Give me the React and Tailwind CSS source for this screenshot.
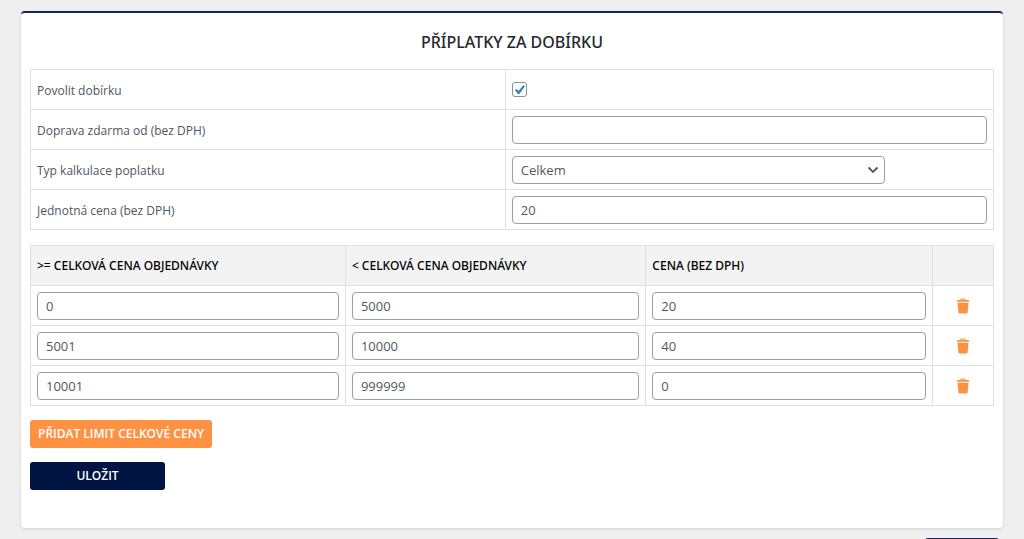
import React, { useState } from "react";

const fieldClass =
  "block h-7 w-full rounded border border-[#9b9ea3] bg-white px-2 font-['Open_Sans',sans-serif] text-[13px] leading-5 text-[#50575e] outline-none";
const labelCell = "h-10 border border-[#e0e0e0] px-1.5 pt-0.5 pb-0";
const bodyCell = "h-10 border border-[#e0e0e0] px-1.5 py-0";
const headCell = "h-10 border border-[#e0e0e0] px-1.5 py-0 text-left font-medium";

const initialRows = [
  { id: 1, from: "0", to: "5000", price: "20" },
  { id: 2, from: "5001", to: "10000", price: "40" },
  { id: 3, from: "10001", to: "999999", price: "0" },
];

function TrashIcon() {
  return (
    <svg viewBox="0 0 14 16" className="h-4 w-3.5" fill="currentColor" aria-hidden="true">
      <path d="M4 2.100C4.300 1 5.200.6 7 .6s2.700.4 3 1.500h2.700c.3 0 .5.200.5.500v1.200H.8V2.600c0-.3.200-.5.500-.5zm1.300 0h3.400c-.2-.4-.7-.5-1.700-.5s-1.500.1-1.700.5z" />
      <path d="M1.500 4.800h11l-.9 9.800c-.1.500-.4.800-.9.800H3.300c-.5 0-.8-.3-.9-.8z" />
    </svg>
  );
}

function SettingRow({ id, label, children }) {
  return (
    <tr>
      <th scope="row" className={labelCell + " text-left font-['Open_Sans',sans-serif] font-normal"}>
        <label htmlFor={id}>{label}</label>
      </th>
      <td className={bodyCell}>{children}</td>
    </tr>
  );
}

export default function App() {
  const [rows, setRows] = useState(initialRows);
  const [enabled, setEnabled] = useState(true);

  const update = (id, key, value) =>
    setRows(rows.map((row) => (row.id === id ? { ...row, [key]: value } : row)));
  const addRow = () =>
    setRows([...rows, { id: Math.max(0, ...rows.map((r) => r.id)) + 1, from: "", to: "", price: "" }]);

  return (
    <div className="h-screen overflow-hidden bg-[#efefef] px-[21px] pt-[11px] font-['Noto_Sans','Open_Sans',sans-serif] text-xs text-[#50575e]">
      <main className="rounded border-t-2 border-[#14265a] bg-white px-[9px] pb-[38px] shadow-[0_1px_3px_rgba(0,0,0,0.12)]">
        <h1 className="pt-[17px] pb-[15px] text-center text-base leading-6 font-medium text-[#23282d]">
          PŘÍPLATKY ZA DOBÍRKU
        </h1>

        <table className="w-full table-fixed border-collapse">
          <colgroup>
            <col className="w-[49.3%]" />
            <col />
          </colgroup>
          <tbody>
            <SettingRow id="enabled" label="Povolit dobírku">
              <span className="relative block size-[15px]">
                <input
                  id="enabled"
                  type="checkbox"
                  checked={enabled}
                  onChange={(e) => setEnabled(e.target.checked)}
                  className="peer block size-[15px] appearance-none rounded-[3px] border border-[#8c8f94] bg-white"
                />
                <svg
                  viewBox="0 0 15 15"
                  className="pointer-events-none absolute inset-0 hidden size-[15px] peer-checked:block"
                  fill="#3582c4"
                  aria-hidden="true"
                >
                  <path d="M11.300 3.300l1.700 1L7.200 12.200H6L2.800 8l1.700-1.100 2.200 1.900z" />
                </svg>
              </span>
            </SettingRow>
            <SettingRow id="free-from" label="Doprava zdarma od (bez DPH)">
              <input id="free-from" type="text" className={fieldClass} />
            </SettingRow>
            <SettingRow id="fee-type" label="Typ kalkulace poplatku">
              <span className="relative block w-[78.6%]">
                <select id="fee-type" className={fieldClass + " appearance-none"}>
                  <option>Celkem</option>
                </select>
                <svg
                  viewBox="0 0 12 12"
                  className="pointer-events-none absolute top-2 right-1.5 size-3"
                  fill="none"
                  stroke="#50575e"
                  strokeWidth="1.800"
                  aria-hidden="true"
                >
                  <path d="M1.500 3.500L6 8l4.500-4.500" />
                </svg>
              </span>
            </SettingRow>
            <SettingRow id="flat-price" label="Jednotná cena (bez DPH)">
              <input id="flat-price" type="text" defaultValue="20" className={fieldClass} />
            </SettingRow>
          </tbody>
        </table>

        <table className="mt-[15px] w-full table-fixed border-collapse">
          <colgroup>
            <col className="w-[32.7%]" />
            <col className="w-[31.2%]" />
            <col className="w-[29.8%]" />
            <col />
          </colgroup>
          <thead className="bg-[#f3f3f3] text-black">
            <tr>
              <th scope="col" className={headCell}>&gt;= CELKOVÁ CENA OBJEDNÁVKY</th>
              <th scope="col" className={headCell}>&lt; CELKOVÁ CENA OBJEDNÁVKY</th>
              <th scope="col" className={headCell}>CENA (BEZ DPH)</th>
              <td className={headCell}></td>
            </tr>
          </thead>
          <tbody>
            {rows.map((row) => (
              <tr key={row.id}>
                <td className={bodyCell}>
                  <input
                    type="text"
                    aria-label=">= Celková cena objednávky"
                    value={row.from}
                    onChange={(e) => update(row.id, "from", e.target.value)}
                    className={fieldClass}
                  />
                </td>
                <td className={bodyCell}>
                  <input
                    type="text"
                    aria-label="< Celková cena objednávky"
                    value={row.to}
                    onChange={(e) => update(row.id, "to", e.target.value)}
                    className={fieldClass}
                  />
                </td>
                <td className={bodyCell}>
                  <input
                    type="text"
                    aria-label="Cena (bez DPH)"
                    value={row.price}
                    onChange={(e) => update(row.id, "price", e.target.value)}
                    className={fieldClass}
                  />
                </td>
                <td className={bodyCell}>
                  <button
                    type="button"
                    aria-label="Odstranit"
                    onClick={() => setRows(rows.filter((r) => r.id !== row.id))}
                    className="mx-auto block text-[#ff9142]"
                  >
                    <TrashIcon />
                  </button>
                </td>
              </tr>
            ))}
          </tbody>
        </table>

        <div className="mt-3.5 flex flex-col items-start gap-3.5 font-['Open_Sans',sans-serif]">
          <button
            type="button"
            onClick={addRow}
            className="h-7 rounded-[3px] bg-[#ff9142] px-2 text-xs font-semibold text-white"
          >
            PŘIDAT LIMIT CELKOVÉ CENY
          </button>
          <button
            type="submit"
            className="h-7 w-[135px] rounded-[3px] bg-[#001443] text-xs font-semibold text-white"
          >
            ULOŽIT
          </button>
        </div>
      </main>

      <div className="mt-2.5 flex justify-end pr-1">
        <div className="h-7 w-[74px] rounded-[3px] bg-[#27215b]"></div>
      </div>
    </div>
  );
}
